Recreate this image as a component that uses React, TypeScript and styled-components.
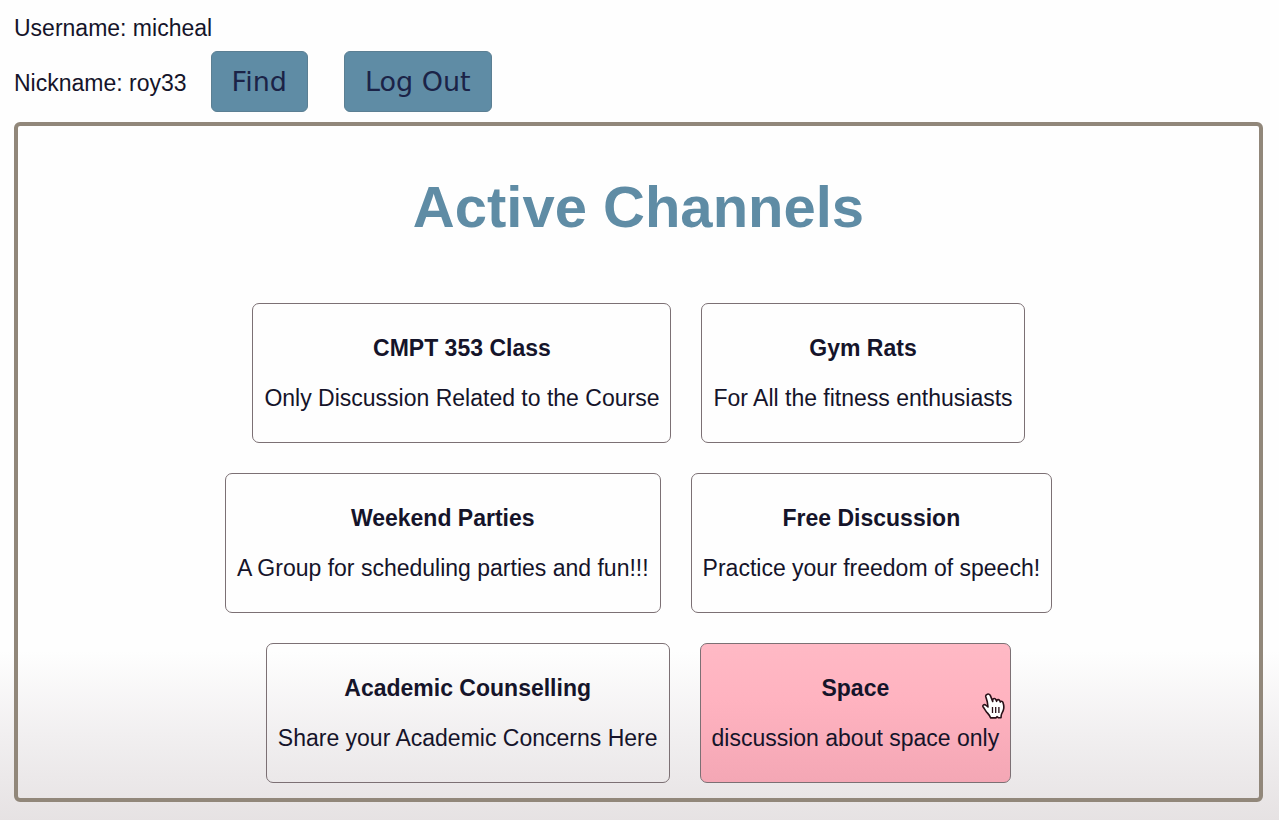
import React from "react";
import styled, { createGlobalStyle } from "styled-components";

const GlobalStyle = createGlobalStyle`
  *, *::before, *::after { box-sizing: border-box; }
  body {
    margin: 0;
    background: #fefefe;
    color: #15142a;
    font: 23px/26px "Liberation Sans", Arial, sans-serif;
  }
`;

const Page = styled.main`
  display: flex;
  flex-direction: column;
  gap: 10px;
  min-height: 100vh;
  padding: 15px 16px 19px 14px;
  background: linear-gradient(#fefefe, #f1eff0 50%, #e6e2e3) bottom / 100% 170px no-repeat;
`;

const Line = styled.p`
  margin: 0;
`;

const AccountRow = styled.div`
  display: flex;
  align-items: baseline;
`;

const Actions = styled.div`
  display: flex;
  gap: 36px;
  margin-left: 24px;
`;

const ActionButton = styled.button`
  height: 61px;
  padding: 0 20px;
  border: 1px solid #5b7f93;
  border-radius: 6px;
  background: #5f8ca5;
  color: #1b2347;
  font: 27px/30px "DejaVu Sans", Verdana, sans-serif;
  cursor: pointer;
`;

const Panel = styled.section`
  padding: 48px 15px 15px;
  border: 4px solid #91877a;
  border-radius: 6px;
`;

const Heading = styled.h1`
  margin: 0 0 63px;
  color: #5f8ca5;
  font-size: 58px;
  line-height: 66px;
  text-align: center;
`;

const ChannelList = styled.div`
  display: flex;
  flex-wrap: wrap;
  justify-content: center;
  gap: 30px;
`;

const activeFill = "linear-gradient(#ffb9c5, #ffb3c0 40%, #f4a7b5)";

const Channel = styled.a<{ $active?: boolean }>`
  position: relative;
  display: flex;
  flex-direction: column;
  gap: 24px;
  padding: 31px 11px;
  border: 1px solid #7c7074;
  border-radius: 7px;
  background: ${(p) => (p.$active ? activeFill : "transparent")};
  color: inherit;
  text-align: center;
  text-decoration: none;

  &:hover { background: ${activeFill}; }
`;

const ChannelName = styled.strong`
  font-weight: 700;
`;

const Pointer = styled.svg`
  position: absolute;
  top: 49px;
  right: 5px;
  width: 23px;
  height: 26px;
`;

const channels = [
  { name: "CMPT 353 Class", about: "Only Discussion Related to the Course" },
  { name: "Gym Rats", about: "For All the fitness enthusiasts" },
  { name: "Weekend Parties", about: "A Group for scheduling parties and fun!!!" },
  { name: "Free Discussion", about: "Practice your freedom of speech!" },
  { name: "Academic Counselling", about: "Share your Academic Concerns Here" },
  { name: "Space", about: "discussion about space only", active: true },
];

const HandPointer = () => (
  <Pointer viewBox="0 0 23 26" aria-hidden="true">
    <path
      d="M5.4 1.2C6.8.7 8 1.5 8.500 2.900L10.700 8.500V6.800C11 5.200 13.300 5.100 13.900 6.600L14.600 8.300C14.700 6.300 17.100 6 17.800 7.700L18.300 9.100C18.700 7.900 20.400 7.900 20.900 9.200C21.900 12 22.300 14.500 21.300 17.300C20.700 19.200 19.400 20.200 19.200 22.500L19 24.700L16.300 24.700L15 23.700L13.900 24.900H8.600C8.100 22.500 6.200 20.900 4.500 18.900C3.100 17.200 2.300 15.500 1.200 14C.2 12.400 1.900 10.900 3.600 12L6 14L5.300 8.800L3.800 3.800C3.500 2.600 4.200 1.600 5.400 1.200Z"
      fill="#fff"
      stroke="#2a1018"
      strokeWidth="1.6"
      strokeLinejoin="round"
    />
    <path d="M10.500 14v6M13.700 14v6M16.900 14v6" stroke="#2a1018" strokeWidth="1.300" />
  </Pointer>
);

export default function App() {
  return (
    <>
      <GlobalStyle />
      <Page>
        <Line>Username: micheal</Line>
        <AccountRow>
          <Line>Nickname: roy33</Line>
          <Actions>
            <ActionButton type="button">Find</ActionButton>
            <ActionButton type="button">Log Out</ActionButton>
          </Actions>
        </AccountRow>
        <Panel>
          <Heading>Active Channels</Heading>
          <ChannelList>
            {channels.map((c) => (
              <Channel key={c.name} href="#" $active={c.active}>
                <ChannelName>{c.name}</ChannelName>
                <span>{c.about}</span>
                {c.active && <HandPointer />}
              </Channel>
            ))}
          </ChannelList>
        </Panel>
      </Page>
    </>
  );
}
